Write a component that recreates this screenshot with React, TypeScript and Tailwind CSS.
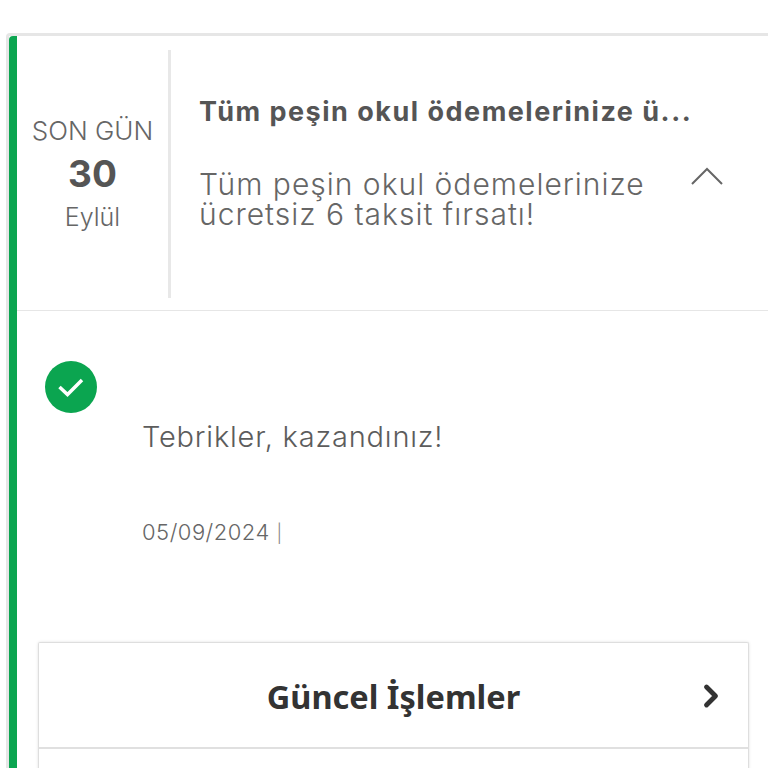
import { ChevronRight } from 'lucide-react'

const gotham = 'font-["Inter","Liberation_Sans",sans-serif]'

function DateBox() {
  return (
    <div className="w-[151px] shrink-0 flex flex-col items-center pt-[79px] text-[#666666]">
      <div className="text-[26px] leading-[32px] font-light whitespace-nowrap">SON GÜN</div>
      <div className="mt-[7px] text-[37px] leading-[40px] font-bold text-[#555555]">30</div>
      <div className="mt-[9px] text-[25px] leading-[28px] font-light">Eylül</div>
    </div>
  )
}

export default function App() {
  return (
    <div className={`h-[768px] w-[768px] overflow-hidden bg-white pt-[33px] ${gotham}`}>
      <div className="h-[735px] ml-[6px] border-t-[3px] border-l-[3px] border-[#e6e6e6] rounded-tl-[4px]">
        <div className="h-full border-l-[8px] border-[#0ba550] rounded-tl-[4px]">
          {/* Campaign header */}
          <div className="h-[275px] flex border-b border-[#e6e6e6]">
            <DateBox />
            <div className="w-[3px] h-[248px] mt-[14px] bg-[#e8e8e8]" />
            <div className="flex-1 min-w-0 pl-[28px] pt-[59px] relative">
              <div className="text-[27px] leading-[34px] font-bold tracking-[1.5px] text-[#555555] whitespace-nowrap">
                Tüm peşin okul ödemelerinize ü...
              </div>
              <div className="mt-[40px] text-[30px] leading-[30px] font-light tracking-[1px] text-[#666666] w-[490px]">
                Tüm peşin okul ödemelerinize
                <br />
                ücretsiz 6 taksit fırsatı!
              </div>
              <svg className="absolute right-[44px] top-[130px]" width="34" height="20" viewBox="0 0 34 20" fill="none">
                <path d="M2 18L17 3L32 18" stroke="#666666" strokeWidth="2" />
              </svg>
            </div>
          </div>

          {/* Result */}
          <div className="pl-[28px] pt-[50px]">
            <div className="w-[52px] h-[52px] rounded-full bg-[#0ba550] flex items-center justify-center">
              <svg width="28" height="22" viewBox="0 0 28 22" fill="none">
                <path d="M2.5 11L10.5 18.5L25 4" stroke="white" strokeWidth="3.5" />
              </svg>
            </div>
            <div className="pl-[97px] mt-[6px] text-[29px] leading-[36px] font-light tracking-[0.8px] text-[#5c5c5c] whitespace-nowrap">
              Tebrikler, kazandınız!
            </div>
            <div className="pl-[97px] mt-[63px] text-[22px] leading-[28px] font-light tracking-[0.5px] text-[#666666]">
              05/09/2024 <span className="text-[18px] text-[#888888]">|</span>
            </div>
          </div>

          {/* Menu */}
          <div className="ml-[21px] mr-[19px] mt-[94px] border border-b-0 border-[#dedede] rounded-t-[2px] shadow-[0_0_3px_rgba(0,0,0,0.12)]">
            <div className='h-[106px] pt-[4px] flex items-center justify-center relative border-b-2 border-[#e0e0e0] font-["Noto_Sans",sans-serif]'>
              <span className="text-[32.5px] font-bold text-[#333333]">Güncel İşlemler</span>
              <ChevronRight className="absolute right-[19px] top-[35px]" size={36} strokeWidth={3.2} color="#333333" />
            </div>
            <div className="h-[40px]" />
          </div>
        </div>
      </div>
    </div>
  )
}
